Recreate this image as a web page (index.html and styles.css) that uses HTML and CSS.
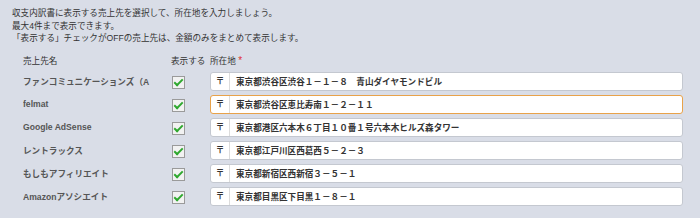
FILE: index.html
```html
<!DOCTYPE html>
<html lang="ja">
<head>
  <meta charset="UTF-8" />
  <title>収支内訳書 売上先</title>
  <link rel="stylesheet" href="styles.css">
</head>
<body>
  <div class="panel">
    <div class="intro">
      <p>収支内訳書に表示する売上先を選択して、所在地を入力しましょう。</p>
      <p>最大4件まで表示できます。</p>
      <p>「表示する」チェックがOFFの売上先は、金額のみをまとめて表示します。</p>
    </div>

    <div class="grid">
      <div class="head name">売上先名</div>
      <div class="head">表示する</div>
      <div class="head">所在地 <span class="req">*</span></div>

      <div class="name">ファンコミュニケーションズ（A</div>
      <div class="chk"><span class="box"></span></div>
      <div class="addr"><span class="zip">〒</span><span class="val">東京都渋谷区渋谷１－１－８　青山ダイヤモンドビル</span></div>

      <div class="name">felmat</div>
      <div class="chk"><span class="box"></span></div>
      <div class="addr focus"><span class="zip">〒</span><span class="val">東京都渋谷区恵比寿南１－２－１１</span></div>

      <div class="name">Google AdSense</div>
      <div class="chk"><span class="box"></span></div>
      <div class="addr"><span class="zip">〒</span><span class="val">東京都港区六本木６丁目１０番１号六本木ヒルズ森タワー</span></div>

      <div class="name">レントラックス</div>
      <div class="chk"><span class="box"></span></div>
      <div class="addr"><span class="zip">〒</span><span class="val">東京都江戸川区西葛西５－２－３</span></div>

      <div class="name">もしもアフィリエイト</div>
      <div class="chk"><span class="box"></span></div>
      <div class="addr"><span class="zip">〒</span><span class="val">東京都新宿区西新宿３－５－１</span></div>

      <div class="name">Amazonアソシエイト</div>
      <div class="chk"><span class="box"></span></div>
      <div class="addr"><span class="zip">〒</span><span class="val">東京都目黒区下目黒１－８－１</span></div>
    </div>
  </div>
</body>
</html>
```

FILE: styles.css
```css
body {
  margin: 0;
  background-color: #d9dde7;
  color: #333;
  font-family: "Liberation Sans", "Noto Sans CJK JP", sans-serif;
  font-size: 8.6px;
}

.panel {
  width: 684px;
  height: 218px;
  padding: 7px 0 0 12px;
  box-sizing: border-box;
}

.intro p {
  margin: 0;
  line-height: 12.5px;
}

.grid {
  display: grid;
  grid-template-columns: 148px 39px 473px;
  grid-template-rows: 17px;
  grid-auto-rows: 23px;
  align-items: center;
  margin: 8px 0 0 11px;
}

.head {
  color: #333;
  line-height: 16px;
}

.req {
  color: #e03030;
  font-size: 10px;
}

.name {
  font-weight: bold;
  color: #555;
  white-space: nowrap;
  overflow: hidden;
}

.head.name {
  font-weight: normal;
  color: #333;
}

.chk {
  padding: 3px 0 0 1px;
}

.box {
  display: block;
  width: 11px;
  height: 11px;
  border: 1px solid #9a9a9a;
  background: #f2f2f2;
  position: relative;
}

.box::after {
  content: "";
  position: absolute;
  left: 3px;
  top: 0px;
  width: 3px;
  height: 7px;
  border: solid #2fa82f;
  border-width: 0 2px 2px 0;
  transform: rotate(45deg);
}

.addr {
  display: flex;
  align-items: center;
  height: 17px;
  background: #fff;
  border: 1px solid #c4c8d0;
  border-radius: 3px;
  font-weight: bold;
  color: #333;
}

.addr.focus {
  border-color: #e8a24a;
}

.zip {
  width: 18px;
  height: 100%;
  border-right: 1px solid #dcdcdc;
  text-align: center;
  line-height: 17px;
}

.val {
  padding-left: 6px;
  white-space: nowrap;
}
```
